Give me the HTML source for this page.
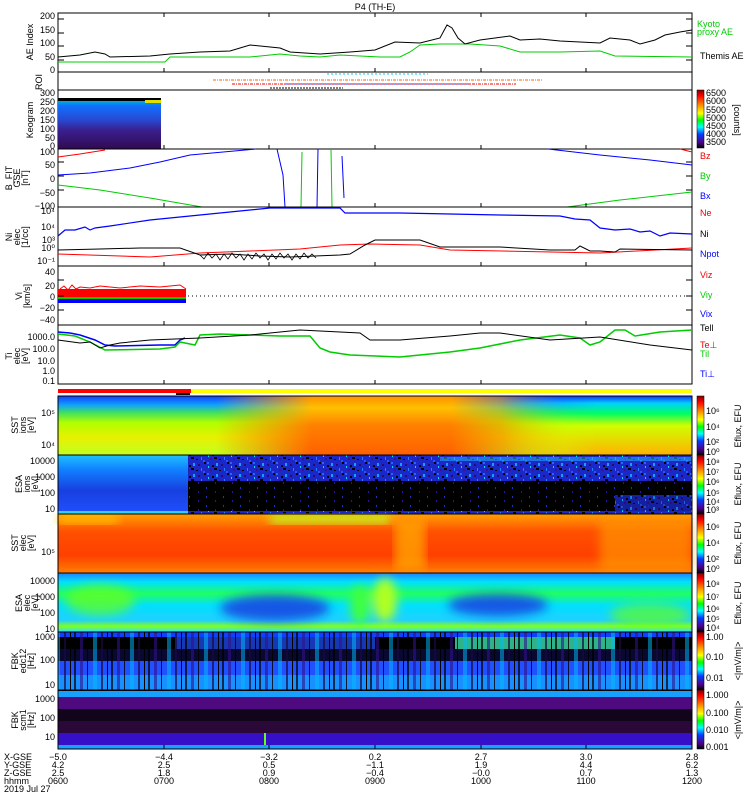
<!DOCTYPE html>
<html><head><meta charset="utf-8"><style>
html,body{margin:0;padding:0;background:#fff;}
svg{display:block;font-family:"Liberation Sans",sans-serif;}
text{font-size:9px;}
</style></head><body>
<svg width="750" height="800" viewBox="0 0 750 800" xmlns="http://www.w3.org/2000/svg">
<defs>
<linearGradient id="cb" x1="0" y1="0" x2="0" y2="1">
<stop offset="0" stop-color="#800000"/><stop offset="0.1" stop-color="#ff0000"/><stop offset="0.3" stop-color="#ffb000"/><stop offset="0.4" stop-color="#ffff00"/><stop offset="0.52" stop-color="#00ff00"/><stop offset="0.64" stop-color="#00ffff"/><stop offset="0.76" stop-color="#0040ff"/><stop offset="0.9" stop-color="#500090"/><stop offset="1" stop-color="#000000"/>
</linearGradient>
<linearGradient id="keo" x1="0" y1="0" x2="0" y2="1">
<stop offset="0" stop-color="#00b0d0"/><stop offset="0.1" stop-color="#1070ff"/><stop offset="0.4" stop-color="#2848d0"/><stop offset="0.6" stop-color="#3a2090"/><stop offset="1" stop-color="#300a50"/>
</linearGradient>
<linearGradient id="s1a" x1="0" y1="0" x2="0" y2="1">
<stop offset="0" stop-color="#1040ff"/><stop offset="0.15" stop-color="#10a0ff"/><stop offset="0.28" stop-color="#40e060"/><stop offset="0.45" stop-color="#b0ff00"/><stop offset="0.7" stop-color="#e8f000"/><stop offset="1" stop-color="#c0ff20"/>
</linearGradient>
<linearGradient id="s1b" x1="0" y1="0" x2="0" y2="1">
<stop offset="0" stop-color="#ff9000"/><stop offset="0.2" stop-color="#ffc000"/><stop offset="0.5" stop-color="#ff8000"/><stop offset="1" stop-color="#ff6000"/>
</linearGradient>
<linearGradient id="s1c" x1="0" y1="0" x2="0" y2="1">
<stop offset="0" stop-color="#1030ff"/><stop offset="0.12" stop-color="#00d0ff"/><stop offset="0.3" stop-color="#00ff60"/><stop offset="0.5" stop-color="#d0ff00"/><stop offset="1" stop-color="#ffb000"/>
</linearGradient>
<linearGradient id="s1h" x1="0" y1="0" x2="1" y2="0">
<stop offset="0" stop-color="#fff" stop-opacity="0"/><stop offset="0.25" stop-color="#fff" stop-opacity="0"/><stop offset="0.4" stop-color="#fff" stop-opacity="1"/><stop offset="0.62" stop-color="#fff" stop-opacity="1"/><stop offset="0.8" stop-color="#fff" stop-opacity="0"/>
</linearGradient>
<mask id="m1"><rect x="58" y="396" width="634" height="59" fill="url(#s1h)"/></mask>
<linearGradient id="s1r" x1="0" y1="0" x2="1" y2="0">
<stop offset="0" stop-color="#fff" stop-opacity="0"/><stop offset="0.7" stop-color="#fff" stop-opacity="0"/><stop offset="0.85" stop-color="#fff" stop-opacity="1"/><stop offset="1" stop-color="#fff" stop-opacity="1"/>
</linearGradient>
<mask id="m1r"><rect x="58" y="396" width="634" height="59" fill="url(#s1r)"/></mask>
<linearGradient id="e1" x1="0" y1="0" x2="0" y2="1">
<stop offset="0" stop-color="#20c0ff"/><stop offset="0.25" stop-color="#1080ff"/><stop offset="0.6" stop-color="#1840e0"/><stop offset="1" stop-color="#2050ff"/>
</linearGradient>
<pattern id="noise" width="23" height="11" patternUnits="userSpaceOnUse">
<rect width="23" height="11" fill="#1a28c8"/><rect x="0" y="0" width="2" height="2" fill="#3060ff"/><rect x="5" y="3" width="2" height="2" fill="#000"/><rect x="9" y="1" width="2" height="3" fill="#10a0ff"/><rect x="3" y="7" width="2" height="2" fill="#40108a"/><rect x="7" y="6" width="3" height="2" fill="#000"/><rect x="1" y="4" width="1" height="2" fill="#00e0ff"/><rect x="14" y="2" width="2" height="2" fill="#2a0a70"/><rect x="17" y="6" width="1" height="3" fill="#2080ff"/><rect x="12" y="8" width="2" height="1" fill="#000"/><rect x="20" y="0" width="2" height="2" fill="#000"/><rect x="19" y="9" width="2" height="2" fill="#3050ff"/>
</pattern>
<pattern id="noise2" width="17" height="9" patternUnits="userSpaceOnUse">
<rect width="17" height="9" fill="#000"/><rect x="2" y="1" width="1" height="2" fill="#2030d0"/><rect x="11" y="5" width="1" height="2" fill="#3010a0"/>
</pattern>
<linearGradient id="s2" x1="0" y1="0" x2="0" y2="1">
<stop offset="0" stop-color="#ffa000"/><stop offset="0.3" stop-color="#ff5000"/><stop offset="0.7" stop-color="#ff4000"/><stop offset="1" stop-color="#ff8000"/>
</linearGradient>
<linearGradient id="e2" x1="0" y1="0" x2="0" y2="1">
<stop offset="0" stop-color="#2080ff"/><stop offset="0.15" stop-color="#00e0ff"/><stop offset="0.35" stop-color="#20ff60"/><stop offset="0.55" stop-color="#00e0ff"/><stop offset="0.8" stop-color="#20d0ff"/><stop offset="0.9" stop-color="#80ff20"/><stop offset="1" stop-color="#30e0ff"/>
</linearGradient>
<filter id="bl"><feGaussianBlur stdDeviation="5"/></filter>
<pattern id="stripe" width="37" height="60" patternUnits="userSpaceOnUse">
<rect x="0" width="2" height="60" fill="#000" opacity="0.7"/><rect x="6" width="3" height="60" fill="#30108a" opacity="0.6"/><rect x="13" width="1" height="60" fill="#000" opacity="0.8"/><rect x="19" width="4" height="60" fill="#00c0ff" opacity="0.5"/><rect x="27" width="2" height="60" fill="#1a0a40" opacity="0.7"/><rect x="33" width="1" height="60" fill="#000"/>
</pattern>
<pattern id="vt" width="21.13" height="800" patternUnits="userSpaceOnUse" x="58">
<rect x="0" y="0" width="1" height="800" fill="#000"/>
</pattern>
</defs>

<text x="375" y="10" font-size="11" text-anchor="middle">P4 (TH-E)</text>

<!-- AE panel -->
<rect x="58" y="13" width="634" height="59" fill="none" stroke="#000"/>
<polyline fill="none" stroke="#0c0" points="58,62 165,62 170,57 250,57 280,54 300,56 320,57 340,55 380,57 400,57 410,52 420,45 440,44 470,44 500,46 520,52 560,52 600,51 615,56 692,57"/>
<polyline fill="none" stroke="#000" points="58,57 80,55 95,52 105,54 110,57 150,56 170,54 200,52 230,51 250,45 280,48 290,52 320,54 350,52 375,50 395,42 420,43 440,38 447,25 452,28 458,38 465,44 480,40 495,38 510,36 520,40 540,39 560,41 580,42 600,43 610,38 630,40 640,44 655,40 665,35 680,32 692,30"/>
<g text-anchor="end"><text x="55" y="19">200</text><text x="55" y="33">150</text><text x="55" y="46">100</text><text x="55" y="60">50</text><text x="55" y="73">0</text></g>
<text transform="translate(33,42) rotate(-90)" text-anchor="middle" font-size="8">AE Index</text>
<text x="697" y="27" fill="#0c0" font-size="8">Kyoto</text><text x="697" y="35" fill="#0c0" font-size="8">proxy AE</text>
<text x="700" y="59" font-size="8">Themis AE</text>

<!-- ROI -->
<rect x="58" y="72" width="634" height="18" fill="none" stroke="#000"/>
<line x1="327" y1="74" x2="428" y2="74" stroke="#0ce" stroke-dasharray="2,2"/>
<line x1="213" y1="80" x2="543" y2="80" stroke="#f60" stroke-dasharray="3,1,1,1"/>
<line x1="232" y1="84" x2="516" y2="84" stroke="#f00" stroke-dasharray="3,1,1,1"/>
<line x1="285" y1="84" x2="470" y2="84" stroke="#24f" stroke-dasharray="3,1"/>
<line x1="270" y1="88" x2="343" y2="88" stroke="#000" stroke-dasharray="2,1"/>
<text transform="translate(42,82) rotate(-90)" text-anchor="middle" font-size="8">ROI</text>

<!-- Keogram -->
<rect x="58" y="90" width="634" height="59" fill="none" stroke="#000"/>
<rect x="58" y="101" width="103" height="48" fill="url(#keo)"/>
<rect x="58" y="98" width="103" height="3" fill="#000"/>
<rect x="145" y="100" width="16" height="3" fill="#e0e000"/>
<g text-anchor="end" font-size="8"><text x="55" y="96">300</text><text x="55" y="105">250</text><text x="55" y="114">200</text><text x="55" y="123">150</text><text x="55" y="132">100</text><text x="55" y="141">50</text><text x="55" y="149">0</text></g>
<text transform="translate(33,120) rotate(-90)" text-anchor="middle" font-size="8">Keogram</text>
<rect x="697" y="90" width="7" height="58" fill="url(#cb)" stroke="#000" stroke-width="0.5"/>
<g font-size="8"><text x="706" y="96">6500</text><text x="706" y="104">6000</text><text x="706" y="113">5500</text><text x="706" y="121">5000</text><text x="706" y="129">4500</text><text x="706" y="137">4000</text><text x="706" y="145">3500</text></g>
<text transform="translate(734,120) rotate(90)" text-anchor="middle" font-size="8">[counts]</text>

<!-- B -->
<rect x="58" y="149" width="634" height="58" fill="none" stroke="#000"/>
<polyline fill="none" stroke="#f00" points="58,157 80,154 105,150"/>
<polyline fill="none" stroke="#00f" points="58,175 90,173 130,168 160,162 190,155 256,149"/>
<polyline fill="none" stroke="#0c0" points="58,185 100,190 150,198 202,207"/>
<polyline fill="none" stroke="#00f" points="277,149 283,175 285,207"/>
<line x1="302" y1="152" x2="301" y2="207" stroke="#0c0"/>
<line x1="318" y1="149" x2="317" y2="207" stroke="#00f"/>
<line x1="331" y1="149" x2="332" y2="207" stroke="#0c0"/>
<line x1="342" y1="156" x2="344" y2="198" stroke="#00f"/>
<polyline fill="none" stroke="#00f" points="548,149 600,155 650,160 692,165"/>
<polyline fill="none" stroke="#0c0" points="567,207 620,200 692,192"/>
<polyline fill="none" stroke="#f00" points="680,149 692,152"/>
<g text-anchor="end"><text x="55" y="155">100</text><text x="55" y="168">50</text><text x="55" y="182">0</text><text x="55" y="196">−50</text><text x="55" y="209">−100</text></g>
<text transform="translate(12,178) rotate(-90)" text-anchor="middle" font-size="8">B_FIT</text>
<text transform="translate(20,178) rotate(-90)" text-anchor="middle" font-size="7">GSE</text>
<text transform="translate(28,178) rotate(-90)" text-anchor="middle" font-size="8">[nT]</text>
<g font-size="9"><text x="700" y="159" fill="#e00">Bz</text><text x="700" y="179" fill="#0c0">By</text><text x="700" y="199" fill="#00f">Bx</text></g>

<!-- Ni -->
<rect x="58" y="207" width="634" height="59" fill="none" stroke="#000"/>
<polyline fill="none" stroke="#00f" stroke-width="1.2" points="58,236 65,230 75,230 85,227 90,230 95,228 110,226 150,220 200,215 270,208 340,208 345,213 400,213 500,215 560,216 575,219 590,220 600,228 615,230 630,229 640,232 650,231 660,236 670,233 692,234"/>
<polyline fill="none" stroke="#f00" points="58,254 150,257 200,253 250,251 300,249 340,245 370,244 420,245 450,250 600,253 692,248"/>
<polyline fill="none" stroke="#000" points="58,250 100,249 140,248 180,248 200,255 230,254 260,256 290,257 315,256 340,255 350,254 365,245 375,240 420,240 440,247 500,247 550,250 575,250 580,246 590,251 600,251 615,252 620,249 692,250"/>
<polyline fill="none" stroke="#000" stroke-width="0.8" points="200,255 204,259 208,253 212,258 216,254 220,260 224,254 228,259 232,253 236,258 240,254 244,260 248,254 252,259 256,253 260,258 264,254 268,260 272,254 276,259 280,253 284,258 288,254 292,260 296,254 300,259 304,253 308,258 312,254 316,258"/>
<g text-anchor="end" font-size="8"><text x="55" y="214">10⁴</text><text x="55" y="230">10⁴</text><text x="55" y="243">10³</text><text x="55" y="251">10⁰</text><text x="55" y="264">10⁻¹</text></g>
<text transform="translate(12,237) rotate(-90)" text-anchor="middle" font-size="8">Ni</text>
<text transform="translate(20,237) rotate(-90)" text-anchor="middle" font-size="7">elec</text>
<text transform="translate(28,237) rotate(-90)" text-anchor="middle" font-size="8">[1/cc]</text>
<g font-size="9"><text x="700" y="216" fill="#e00">Ne</text><text x="700" y="237">Ni</text><text x="700" y="257" fill="#00f">Npot</text></g>

<!-- Vi -->
<rect x="58" y="266" width="634" height="59" fill="none" stroke="#000"/>
<line x1="188" y1="296" x2="692" y2="296" stroke="#000" stroke-dasharray="1,3"/>
<rect x="58" y="289" width="128" height="8" fill="#f00"/>
<rect x="58" y="297" width="128" height="2" fill="#0c0"/>
<rect x="58" y="299" width="128" height="4" fill="#00f"/>
<polyline fill="none" stroke="#f00" points="60,289 64,286 68,290 72,285 76,289 80,287 90,288 100,286 120,288 140,286 160,287 180,285 186,289"/>
<g text-anchor="end"><text x="55" y="275">40</text><text x="55" y="289">20</text><text x="55" y="300">0</text><text x="55" y="311">−20</text><text x="55" y="323">−40</text></g>
<text transform="translate(22,296) rotate(-90)" text-anchor="middle" font-size="8">Vi</text>
<text transform="translate(30,296) rotate(-90)" text-anchor="middle" font-size="8">[km/s]</text>
<g font-size="9"><text x="700" y="278" fill="#e00">Viz</text><text x="700" y="298" fill="#0c0">Viy</text><text x="700" y="317" fill="#00f">Vix</text></g>

<!-- Ti -->
<rect x="58" y="325" width="634" height="59" fill="none" stroke="#000"/>
<polyline fill="none" stroke="#00f" stroke-width="1.5" points="58,332 70,333 80,335 95,340 105,345 115,346 160,345 175,345 180,340 185,338"/>
<polyline fill="none" stroke="#0c0" stroke-width="1.5" points="58,334 75,336 90,342 105,350 160,349 175,347 180,342 185,343 190,344 195,345 200,335 220,334 250,335 280,336 310,336 320,348 330,352 350,355 400,357 450,352 480,348 520,340 560,335 580,338 590,345 600,342 615,330 625,330 635,336 660,332 692,330"/>
<polyline fill="none" stroke="#000" points="58,340 80,343 90,342 95,345 100,348 110,345 120,343 150,340 200,338 250,335 300,330 360,333 370,340 400,340 450,336 480,333 500,333 550,340 600,337 650,345 692,350"/>
<g text-anchor="end" font-size="8"><text x="55" y="340">1000.0</text><text x="55" y="352">100.0</text><text x="55" y="364">10.0</text><text x="55" y="374">1.0</text><text x="55" y="384">0.1</text></g>
<text transform="translate(12,356) rotate(-90)" text-anchor="middle" font-size="8">Ti</text>
<text transform="translate(20,356) rotate(-90)" text-anchor="middle" font-size="7">elec</text>
<text transform="translate(28,356) rotate(-90)" text-anchor="middle" font-size="8">[eV]</text>
<g font-size="9"><text x="700" y="331">Tell</text><text x="700" y="348" fill="#e00">Te⊥</text><text x="700" y="357" fill="#0c0">Til</text><text x="700" y="377" fill="#00f">Ti⊥</text></g>

<!-- mode bar -->
<rect x="58" y="389" width="133" height="4" fill="#f00"/>
<rect x="191" y="389" width="501" height="4" fill="#ff0"/>
<rect x="176" y="393" width="14" height="2" fill="#000"/>

<!-- SST ion -->
<rect x="58" y="396" width="634" height="59" fill="url(#s1a)"/>
<rect x="58" y="396" width="634" height="59" fill="url(#s1b)" mask="url(#m1)"/>
<rect x="58" y="396" width="634" height="59" fill="url(#s1c)" mask="url(#m1r)"/>
<rect x="58" y="396" width="634" height="59" fill="none" stroke="#000"/>
<g text-anchor="end" font-size="8"><text x="55" y="416">10⁵</text><text x="55" y="448">10⁴</text></g>
<text transform="translate(18,425) rotate(-90)" text-anchor="middle" font-size="8">SST</text>
<text transform="translate(26,425) rotate(-90)" text-anchor="middle" font-size="7">ions</text>
<text transform="translate(34,425) rotate(-90)" text-anchor="middle" font-size="8">[eV]</text>

<!-- ESA ion -->
<rect x="58" y="455" width="634" height="59" fill="url(#e1)"/>
<rect x="188" y="455" width="504" height="59" fill="url(#noise)"/>
<rect x="188" y="481" width="504" height="30" fill="url(#noise2)"/>
<rect x="615" y="495" width="77" height="16" fill="url(#noise)" opacity="0.8"/>
<rect x="440" y="457" width="252" height="4" fill="#20c0ff" opacity="0.5"/>
<rect x="58" y="511" width="130" height="3" fill="#30d0ff"/>
<rect x="58" y="455" width="634" height="59" fill="none" stroke="#000"/>
<g text-anchor="end" font-size="8"><text x="55" y="464">10000</text><text x="55" y="480">1000</text><text x="55" y="496">100</text><text x="55" y="512">10</text></g>
<text transform="translate(22,484) rotate(-90)" text-anchor="middle" font-size="8">ESA</text>
<text transform="translate(30,484) rotate(-90)" text-anchor="middle" font-size="7">ions</text>
<text transform="translate(38,484) rotate(-90)" text-anchor="middle" font-size="8">[eV]</text>

<!-- SST elec -->
<rect x="58" y="514" width="634" height="59" fill="url(#s2)"/>
<rect x="270" y="514" width="120" height="10" fill="#c0ff20" filter="url(#bl)" opacity="0.9"/>
<rect x="58" y="514" width="60" height="10" fill="#ffd000" filter="url(#bl)" opacity="0.7"/>
<rect x="395" y="520" width="30" height="50" fill="#ffb000" filter="url(#bl)" opacity="0.7"/>
<rect x="600" y="520" width="92" height="50" fill="#ffa000" filter="url(#bl)" opacity="0.6"/>
<rect x="58" y="514" width="634" height="59" fill="none" stroke="#000"/>
<text x="55" y="555" font-size="8" text-anchor="end">10⁵</text>
<text transform="translate(18,543) rotate(-90)" text-anchor="middle" font-size="8">SST</text>
<text transform="translate(26,543) rotate(-90)" text-anchor="middle" font-size="7">elec</text>
<text transform="translate(34,543) rotate(-90)" text-anchor="middle" font-size="8">[eV]</text>

<!-- ESA elec -->
<rect x="58" y="573" width="634" height="59" fill="url(#e2)"/>
<g filter="url(#bl)">
<ellipse cx="275" cy="608" rx="55" ry="13" fill="#1840e0" opacity="0.85"/>
<ellipse cx="498" cy="605" rx="50" ry="11" fill="#1840e0" opacity="0.85"/>
<ellipse cx="385" cy="600" rx="12" ry="22" fill="#b0ff20"/>
<ellipse cx="360" cy="605" rx="10" ry="20" fill="#40ff40"/>
<ellipse cx="100" cy="600" rx="35" ry="15" fill="#60ff20" opacity="0.8"/>
<ellipse cx="650" cy="615" rx="40" ry="12" fill="#60ff20" opacity="0.7"/>
</g>
<rect x="58" y="573" width="634" height="59" fill="none" stroke="#000"/>
<g text-anchor="end" font-size="8"><text x="55" y="584">10000</text><text x="55" y="600">1000</text><text x="55" y="616">100</text><text x="55" y="632">10</text></g>
<text transform="translate(22,603) rotate(-90)" text-anchor="middle" font-size="8">ESA</text>
<text transform="translate(30,603) rotate(-90)" text-anchor="middle" font-size="7">elec</text>
<text transform="translate(38,603) rotate(-90)" text-anchor="middle" font-size="8">[eV]</text>

<!-- FBK1 -->
<rect x="58" y="632" width="634" height="58" fill="#1040f0"/>
<rect x="58" y="632" width="634" height="5" fill="#1040ff"/>
<rect x="58" y="637" width="634" height="12" fill="#000"/>
<rect x="175" y="637" width="200" height="12" fill="#2050ff" opacity="0.7"/>
<rect x="455" y="637" width="160" height="12" fill="#40ffc0" opacity="0.7"/>
<rect x="58" y="649" width="634" height="12" fill="#080830"/>
<rect x="58" y="661" width="634" height="14" fill="#2050ff"/>
<rect x="58" y="675" width="634" height="15" fill="#1890ff"/>
<rect x="58" y="632" width="634" height="58" fill="url(#stripe)"/>
<rect x="58" y="632" width="634" height="58" fill="none" stroke="#000"/>
<g text-anchor="end" font-size="8"><text x="55" y="640">1000</text><text x="55" y="663">100</text><text x="55" y="688">10</text></g>
<text transform="translate(18,661) rotate(-90)" text-anchor="middle" font-size="8">FBK</text>
<text transform="translate(26,661) rotate(-90)" text-anchor="middle" font-size="7">edc12</text>
<text transform="translate(34,661) rotate(-90)" text-anchor="middle" font-size="8">[Hz]</text>

<!-- FBK2 -->
<rect x="58" y="690" width="634" height="59" fill="#000"/>
<rect x="58" y="691" width="634" height="6" fill="#18a0ff"/>
<rect x="58" y="697" width="634" height="12" fill="#500a80"/>
<rect x="58" y="709" width="634" height="12" fill="#12041a"/>
<rect x="58" y="721" width="634" height="12" fill="#2a0838"/>
<rect x="58" y="733" width="634" height="12" fill="#3510c8"/>
<rect x="58" y="745" width="634" height="4" fill="#1aa0ff"/>
<rect x="264" y="733" width="2" height="12" fill="#60ff20"/>
<rect x="58" y="690" width="634" height="59" fill="none" stroke="#000"/>
<g text-anchor="end" font-size="8"><text x="55" y="702">1000</text><text x="55" y="721">100</text><text x="55" y="740">10</text></g>
<text transform="translate(18,720) rotate(-90)" text-anchor="middle" font-size="8">FBK</text>
<text transform="translate(26,720) rotate(-90)" text-anchor="middle" font-size="7">scm1</text>
<text transform="translate(34,720) rotate(-90)" text-anchor="middle" font-size="8">[Hz]</text>

<!-- colorbars -->
<g stroke="#000" stroke-width="0.5">
<rect x="697" y="396" width="7" height="59" fill="url(#cb)"/>
<rect x="697" y="455" width="7" height="59" fill="url(#cb)"/>
<rect x="697" y="514" width="7" height="59" fill="url(#cb)"/>
<rect x="697" y="573" width="7" height="59" fill="url(#cb)"/>
<rect x="697" y="632" width="7" height="58" fill="url(#cb)"/>
<rect x="697" y="690" width="7" height="59" fill="url(#cb)"/>
</g>
<g font-size="8">
<text x="706" y="414">10⁶</text><text x="706" y="430">10⁴</text><text x="706" y="445">10²</text><text x="706" y="455">10⁰</text>
<text x="706" y="465">10⁸</text><text x="706" y="475">10⁷</text><text x="706" y="485">10⁶</text><text x="706" y="496">10⁵</text><text x="706" y="505">10⁴</text><text x="706" y="513">10³</text>
<text x="706" y="530">10⁶</text><text x="706" y="546">10⁴</text><text x="706" y="562">10²</text><text x="706" y="572">10⁰</text>
<text x="706" y="587">10⁸</text><text x="706" y="600">10⁷</text><text x="706" y="612">10⁶</text><text x="706" y="622">10⁵</text><text x="706" y="631">10⁴</text>
<text x="706" y="640">1.00</text><text x="706" y="660">0.10</text><text x="706" y="681">0.01</text>
<text x="706" y="698">1.000</text><text x="706" y="716">0.100</text><text x="706" y="733">0.010</text><text x="706" y="750">0.001</text>
</g>
<g font-size="8" text-anchor="middle">
<text transform="translate(741,426) rotate(-90)">Eflux, EFU</text>
<text transform="translate(741,484) rotate(-90)">Eflux, EFU</text>
<text transform="translate(741,543) rotate(-90)">Eflux, EFU</text>
<text transform="translate(741,603) rotate(-90)">Eflux, EFU</text>
<text transform="translate(741,661) rotate(-90)">&lt;|mV/m|&gt;</text>
<text transform="translate(741,720) rotate(-90)">&lt;|mV/m|&gt;</text>
</g>

<!-- minor x ticks on line panels -->
<g stroke="#000" stroke-width="1">
<path d="M164,13v4M269,13v4M375,13v4M481,13v4M586,13v4M164,72v-4M269,72v-4M375,72v-4M481,72v-4M586,72v-4
M164,149v-4M269,149v-4M375,149v-4M481,149v-4M586,149v-4M164,207v-4M269,207v-4M375,207v-4M481,207v-4M586,207v-4
M164,266v-4M269,266v-4M375,266v-4M481,266v-4M586,266v-4M164,325v-4M269,325v-4M375,325v-4M481,325v-4M586,325v-4
M164,384v-4M269,384v-4M375,384v-4M481,384v-4M586,384v-4M164,749v-4M269,749v-4M375,749v-4M481,749v-4M586,749v-4"/>
<path d="M58,19h6M58,33h6M58,46h6M58,60h6M692,19h-6M692,33h-6M692,46h-6M692,60h-6
M58,162h6M58,176h6M58,190h6M692,162h-6M692,176h-6M692,190h-6
M58,280h6M58,296h6M58,310h6M692,280h-6M692,296h-6M692,310h-6"/>
</g>

<!-- bottom labels -->
<g font-size="9">
<text x="4" y="760">X-GSE</text><text x="4" y="768">Y-GSE</text><text x="4" y="776">Z-GSE</text><text x="4" y="784">hhmm</text><text x="4" y="792">2019 Jul 27</text>
</g>
<g font-size="9" text-anchor="middle">
<text x="58" y="760">−5.0</text><text x="58" y="768">4.2</text><text x="58" y="776">2.5</text><text x="58" y="784">0600</text>
<text x="164" y="760">−4.4</text><text x="164" y="768">2.5</text><text x="164" y="776">1.8</text><text x="164" y="784">0700</text>
<text x="269" y="760">−3.2</text><text x="269" y="768">0.5</text><text x="269" y="776">0.9</text><text x="269" y="784">0800</text>
<text x="375" y="760">0.2</text><text x="375" y="768">−1.1</text><text x="375" y="776">−0.4</text><text x="375" y="784">0900</text>
<text x="481" y="760">2.7</text><text x="481" y="768">1.9</text><text x="481" y="776">−0.0</text><text x="481" y="784">1000</text>
<text x="586" y="760">3.0</text><text x="586" y="768">4.4</text><text x="586" y="776">0.7</text><text x="586" y="784">1100</text>
<text x="692" y="760">2.8</text><text x="692" y="768">6.2</text><text x="692" y="776">1.3</text><text x="692" y="784">1200</text>
</g>
</svg>
</body></html>
